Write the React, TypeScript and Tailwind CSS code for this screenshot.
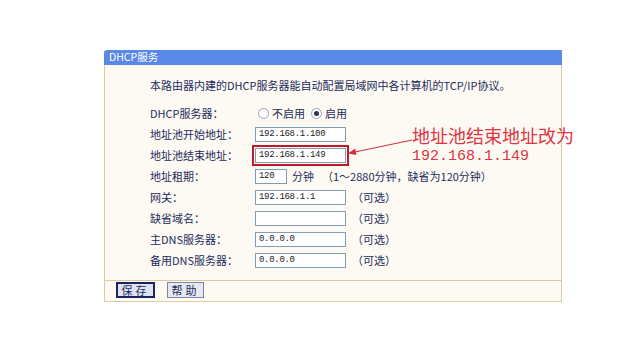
import React from 'react';

const rows = [
    {label: '地址池开始地址：', value: '192.168.1.100', note: ''},
];

const Field = ({value, w = 'w-[91px]'}: {value: string; w?: string}) => (
    <div className={`${w} h-[15px] border border-[#7f9db9] bg-white pl-[3px] flex items-center font-['Liberation_Mono',monospace] text-[9px] tracking-[-0.3px] text-[#222]`}>
        {value}
    </div>
);

const Radio = ({checked}: {checked?: boolean}) => (
    <span className="w-[11px] h-[11px] rounded-full border border-[#9aa3b5] bg-white flex items-center justify-center">
        {checked && <span className="w-[5px] h-[5px] rounded-full bg-[#2a3550]"/>}
    </span>
);

const Optional = () => <span className="ml-[6px]">（可选）</span>;

const App = () => {
    return (
        <div className="relative w-[640px] h-[338px] bg-white pt-[50px] pl-[104px] font-['Noto_Sans_CJK_SC',sans-serif] text-[#1c2b5c]">
            <div className="w-[458px] border-x border-b border-[#dccaa6] bg-[#fcfaf3]">
                <div className="h-[15px] -mx-[1px] bg-[#5a88e6] rounded-tl-[4px] pl-[5px] flex items-center text-white text-[10.5px] leading-none">
                    DHCP服务
                </div>
                <div className="pt-[10px] pb-[9px] pl-[45px] text-[11px] border-b border-[#dccaa6]">
                    <div className="h-[21px] mb-[7px] flex items-center">本路由器内建的DHCP服务器能自动配置局域网中各计算机的TCP/IP协议。</div>

                    <div className="h-[21px] flex items-center">
                        <span className="w-[105px]">DHCP服务器：</span>
                        <span className="flex items-center gap-[3px] ml-[3px]"><Radio/>不启用</span>
                        <span className="flex items-center gap-[3px] ml-[6px]"><Radio checked/>启用</span>
                    </div>
                    {rows.map((r) => (
                        <div key={r.label} className="h-[21px] flex items-center">
                            <span className="w-[105px]">{r.label}</span>
                            <Field value={r.value}/>
                        </div>
                    ))}
                    <div className="h-[21px] flex items-center">
                        <span className="w-[105px]">地址池结束地址：</span>
                        <div className="relative">
                            <Field value="192.168.1.149"/>
                            <span className="absolute -inset-[3px] border-2 border-[#c0182a]"/>
                        </div>
                    </div>
                    <div className="h-[21px] flex items-center">
                        <span className="w-[105px]">地址租期：</span>
                        <Field value="120" w="w-[32px]"/>
                        <span className="ml-[5px]">分钟</span>
                        <span className="ml-[8px]">（1～2880分钟，缺省为120分钟）</span>
                    </div>
                    <div className="h-[21px] flex items-center">
                        <span className="w-[105px]">网关：</span>
                        <Field value="192.168.1.1"/>
                        <Optional/>
                    </div>
                    <div className="h-[21px] flex items-center">
                        <span className="w-[105px]">缺省域名：</span>
                        <Field value=""/>
                        <Optional/>
                    </div>
                    <div className="h-[21px] flex items-center">
                        <span className="w-[105px]">主DNS服务器：</span>
                        <Field value="0.0.0.0"/>
                        <Optional/>
                    </div>
                    <div className="h-[21px] flex items-center">
                        <span className="w-[105px]">备用DNS服务器：</span>
                        <Field value="0.0.0.0"/>
                        <Optional/>
                    </div>
                </div>
                <div className="h-[20px] pt-[1px] pl-[11px] flex items-start gap-[12px] text-[11px]">
                    <button className="h-[16px] w-[39px] border-2 border-[#1a2560] bg-[#dfe2f2] flex items-center justify-center tracking-[3px] leading-none text-[#1c2b5c]">保存</button>
                    <button className="h-[16px] w-[37px] border border-[#7d86a3] bg-[#e6e8f2] flex items-center justify-center tracking-[3px] leading-none text-[#1c2b5c]">帮助</button>
                </div>
            </div>

            {/* annotation */}
            <svg className="absolute left-0 top-0" width="640" height="338">
                <line x1="412" y1="140" x2="355" y2="152" stroke="#d42a3a" strokeWidth="1"/>
                <polygon points="348,153.5 356.4,155 355.2,148.5" fill="#d42a3a"/>
            </svg>
            <div className="absolute left-[412px] top-[126px] text-[#de3444]">
                <div className="text-[18px] leading-[18px]">地址池结束地址改为</div>
                <div className="mt-[5px] font-['Liberation_Mono',monospace] text-[15px] leading-[15px]">192.168.1.149</div>
            </div>
        </div>
    );
};

export default App;
